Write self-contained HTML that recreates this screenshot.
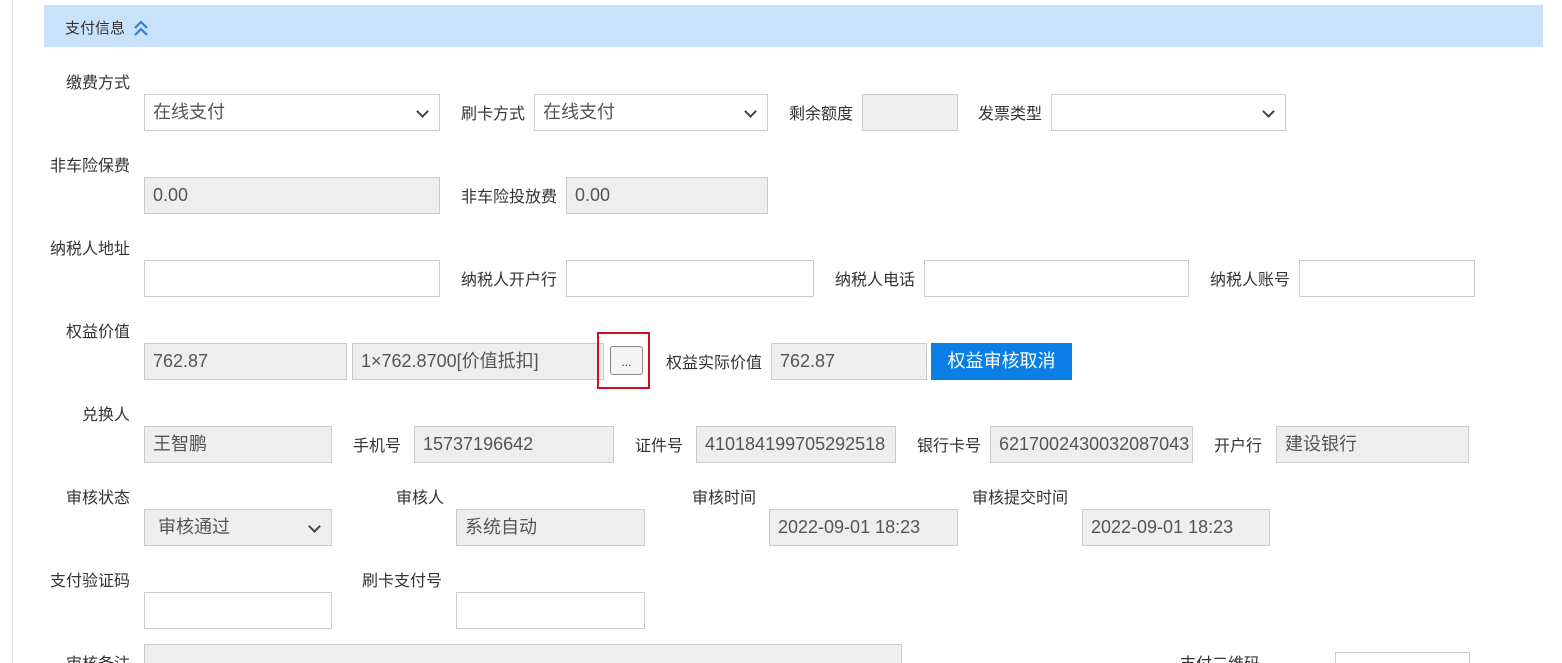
<!DOCTYPE html>
<html><head><meta charset="utf-8"><style>
html,body{margin:0;padding:0;background:#fff;width:1562px;height:663px;overflow:hidden;position:relative;font-family:"Liberation Sans","Noto Sans CJK SC",sans-serif;}
.vl{position:absolute;left:12px;top:0;width:1px;height:663px;background:#e6e6e6}
.hd{position:absolute;left:44px;top:5px;width:1499px;height:42px;background:#c9e2fb}
.hd span{position:absolute;left:21px;top:12px;font-size:15px;color:#333}
.l{position:absolute;font-size:16px;color:#333;white-space:nowrap;line-height:18px}
.i{position:absolute;box-sizing:border-box;border:1px solid #ccc;height:37px;background:#fff;font-size:18px;color:#555;line-height:35px;padding-left:8px;white-space:nowrap;overflow:hidden}
.g{background:#eee}
.sel::after{content:"";position:absolute;right:12px;top:12px;width:7px;height:7px;border-right:2px solid #444;border-bottom:2px solid #444;transform:rotate(45deg)}
</style></head><body>
<div class="vl"></div>
<div class="hd"><span>支付信息</span>
<svg style="position:absolute;left:89px;top:14px" width="16" height="18" viewBox="0 0 16 18"><path d="M2 9 L8 3 L14 9 M2 16 L8 10 L14 16" fill="none" stroke="#2f7fd0" stroke-width="2.2"/></svg></div>

<div class="l" style="left:66px;top:75px">缴费方式</div>
<div class="i sel" style="left:144px;top:94px;width:296px">在线支付</div>
<div class="l" style="left:461px;top:106px">刷卡方式</div>
<div class="i sel" style="left:534px;top:94px;width:234px">在线支付</div>
<div class="l" style="left:789px;top:106px">剩余额度</div>
<div class="i g" style="left:862px;top:94px;width:96px"></div>
<div class="l" style="left:978px;top:106px">发票类型</div>
<div class="i sel" style="left:1051px;top:94px;width:235px"></div>

<div class="l" style="left:50px;top:158px">非车险保费</div>
<div class="i g" style="left:144px;top:177px;width:296px">0.00</div>
<div class="l" style="left:461px;top:189px">非车险投放费</div>
<div class="i g" style="left:566px;top:177px;width:202px">0.00</div>

<div class="l" style="left:50px;top:241px">纳税人地址</div>
<div class="i" style="left:144px;top:260px;width:296px"></div>
<div class="l" style="left:461px;top:272px">纳税人开户行</div>
<div class="i" style="left:566px;top:260px;width:248px"></div>
<div class="l" style="left:835px;top:272px">纳税人电话</div>
<div class="i" style="left:924px;top:260px;width:265px"></div>
<div class="l" style="left:1210px;top:272px">纳税人账号</div>
<div class="i" style="left:1299px;top:260px;width:176px"></div>

<div class="l" style="left:66px;top:324px">权益价值</div>
<div class="i g" style="left:144px;top:343px;width:203px">762.87</div>
<div class="i g" style="left:352px;top:343px;width:252px">1×762.8700[价值抵扣]</div>
<div style="position:absolute;left:597px;top:332px;width:49px;height:53px;border:2px solid #d0101c"></div>
<div style="position:absolute;left:610px;top:346px;width:33px;height:29px;box-sizing:border-box;border:1px solid #888;border-radius:3px;background:#f4f4f4;font-size:12px;text-align:center;line-height:30px;color:#333">...</div>
<div class="l" style="left:666px;top:355px">权益实际价值</div>
<div class="i g" style="left:771px;top:343px;width:156px">762.87</div>
<div style="position:absolute;left:931px;top:343px;width:141px;height:37px;background:#0b7ee6;color:#fff;font-size:18px;line-height:37px;text-align:center">权益审核取消</div>

<div class="l" style="left:82px;top:407px">兑换人</div>
<div class="i g" style="left:144px;top:426px;width:188px">王智鹏</div>
<div class="l" style="left:353px;top:438px">手机号</div>
<div class="i g" style="left:414px;top:426px;width:200px">15737196642</div>
<div class="l" style="left:635px;top:438px">证件号</div>
<div class="i g" style="left:696px;top:426px;width:200px">410184199705292518</div>
<div class="l" style="left:917px;top:438px">银行卡号</div>
<div class="i g" style="left:990px;top:426px;width:203px;padding-right:6px">6217002430032087043</div>
<div class="l" style="left:1214px;top:438px">开户行</div>
<div class="i g" style="left:1276px;top:426px;width:193px">建设银行</div>

<div class="l" style="left:66px;top:490px">审核状态</div>
<div class="i g sel" style="left:144px;top:509px;width:188px;padding-left:13px">审核通过</div>
<div class="l" style="left:396px;top:490px">审核人</div>
<div class="i g" style="left:456px;top:509px;width:189px">系统自动</div>
<div class="l" style="left:692px;top:490px">审核时间</div>
<div class="i g" style="left:769px;top:509px;width:189px">2022-09-01 18:23</div>
<div class="l" style="left:972px;top:490px">审核提交时间</div>
<div class="i g" style="left:1082px;top:509px;width:188px">2022-09-01 18:23</div>

<div class="l" style="left:50px;top:573px">支付验证码</div>
<div class="i" style="left:144px;top:592px;width:188px"></div>
<div class="l" style="left:362px;top:573px">刷卡支付号</div>
<div class="i" style="left:456px;top:592px;width:189px"></div>

<div class="i g" style="left:144px;top:644px;width:758px;height:19px;border-bottom:none"></div>
<div class="l" style="left:66px;top:656px">审核备注</div>
<div class="l" style="left:1180px;top:656px">支付二维码</div>
<div class="i" style="left:1335px;top:652px;width:135px;height:11px;border-bottom:none"></div>
</body></html>
